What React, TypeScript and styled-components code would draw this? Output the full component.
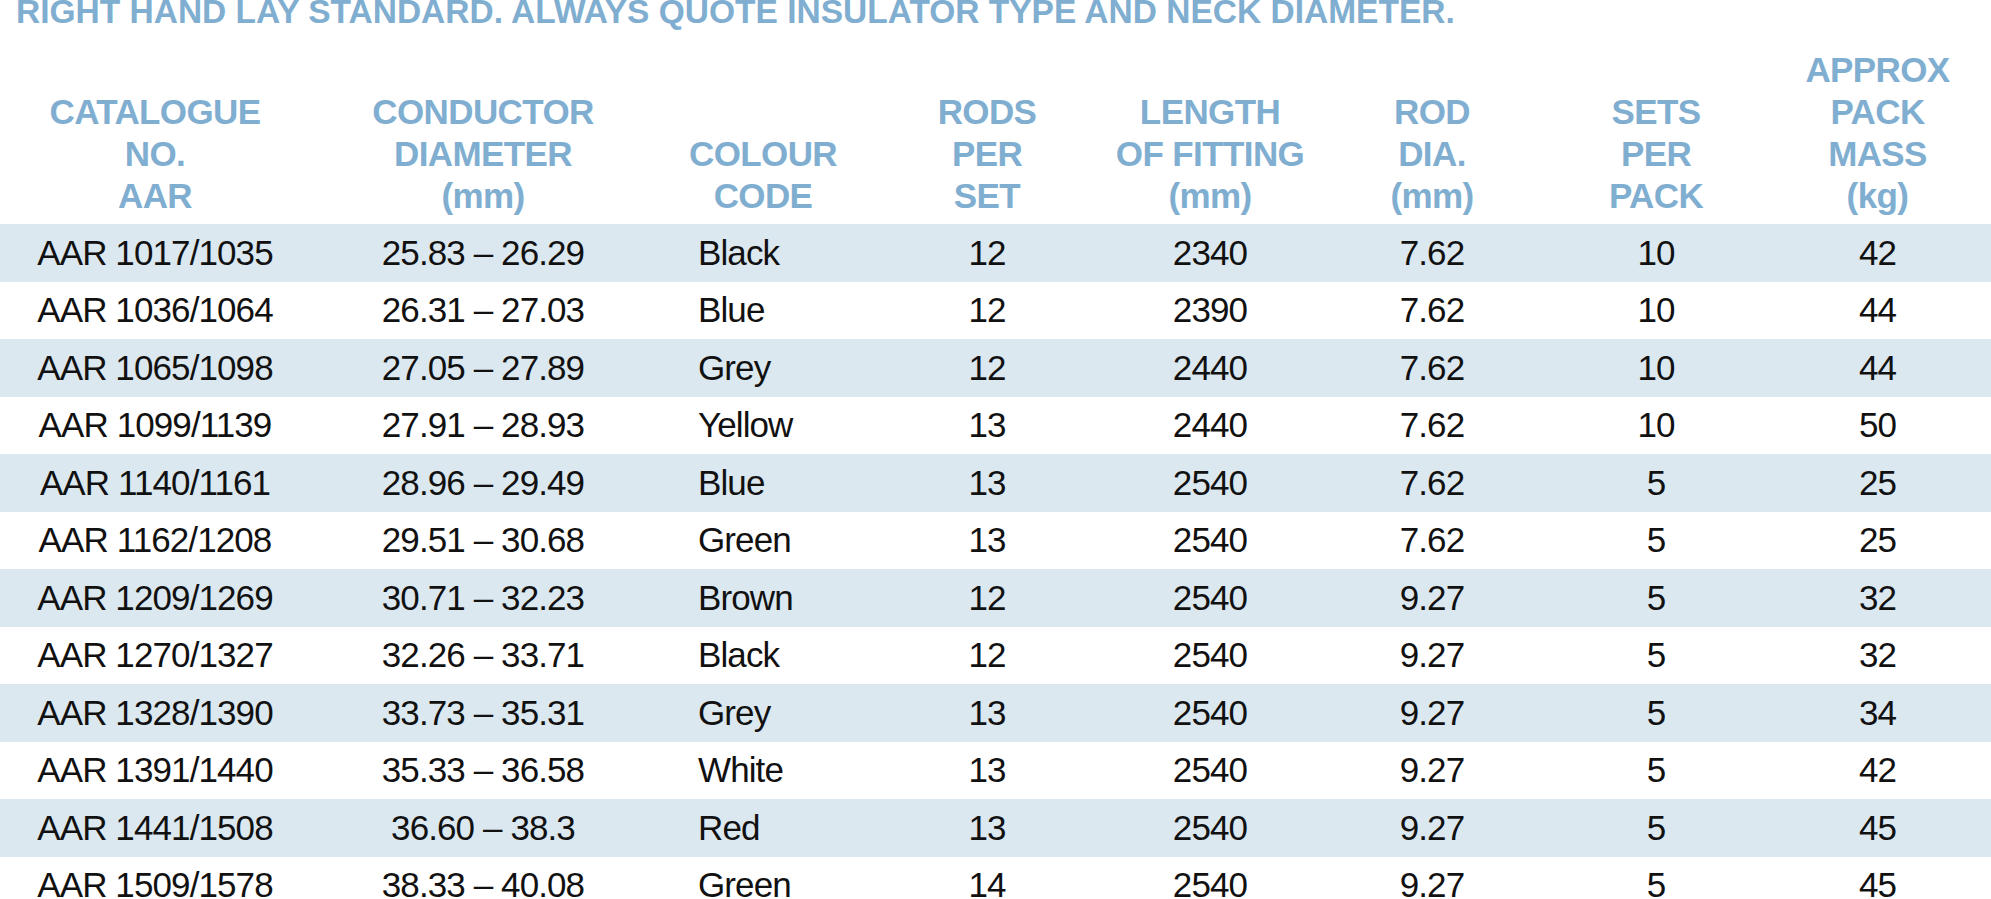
import React from 'react';
import styled, { createGlobalStyle } from 'styled-components';

const GlobalStyle = createGlobalStyle`
  html, body {
    margin: 0;
    padding: 0;
    background: #ffffff;
    overflow: hidden;
  }
  body {
    font-family: 'Liberation Sans', Arial, sans-serif;
  }
`;

type Row = [string, string, string, string, string, string, string, string];

const rows: Row[] = [
  ['AAR 1017/1035', '25.83 – 26.29', 'Black', '12', '2340', '7.62', '10', '42'],
  ['AAR 1036/1064', '26.31 – 27.03', 'Blue', '12', '2390', '7.62', '10', '44'],
  ['AAR 1065/1098', '27.05 – 27.89', 'Grey', '12', '2440', '7.62', '10', '44'],
  ['AAR 1099/1139', '27.91 – 28.93', 'Yellow', '13', '2440', '7.62', '10', '50'],
  ['AAR 1140/1161', '28.96 – 29.49', 'Blue', '13', '2540', '7.62', '5', '25'],
  ['AAR 1162/1208', '29.51 – 30.68', 'Green', '13', '2540', '7.62', '5', '25'],
  ['AAR 1209/1269', '30.71 – 32.23', 'Brown', '12', '2540', '9.27', '5', '32'],
  ['AAR 1270/1327', '32.26 – 33.71', 'Black', '12', '2540', '9.27', '5', '32'],
  ['AAR 1328/1390', '33.73 – 35.31', 'Grey', '13', '2540', '9.27', '5', '34'],
  ['AAR 1391/1440', '35.33 – 36.58', 'White', '13', '2540', '9.27', '5', '42'],
  ['AAR 1441/1508', '36.60 – 38.3', 'Red', '13', '2540', '9.27', '5', '45'],
  ['AAR 1509/1578', '38.33 – 40.08', 'Green', '14', '2540', '9.27', '5', '45'],
];

const headers: string[][] = [
  ['CATALOGUE', 'NO.', 'AAR'],
  ['CONDUCTOR', 'DIAMETER', '(mm)'],
  ['COLOUR', 'CODE'],
  ['RODS', 'PER', 'SET'],
  ['LENGTH', 'OF FITTING', '(mm)'],
  ['ROD', 'DIA.', '(mm)'],
  ['SETS', 'PER', 'PACK'],
  ['APPROX', 'PACK', 'MASS', '(kg)'],
];

const COLUMNS = '310px 346px 214px 234px 212px 232px 216px 227px';

export default function App() {
  return (
    <>
      <GlobalStyle />
      <Page>
        <Title>RIGHT HAND LAY STANDARD. ALWAYS QUOTE INSULATOR TYPE AND NECK DIAMETER.</Title>
        <HeaderRow>
          {headers.map((lines, i) => (
            <HeaderCell key={i}>
              {lines.map((l) => (
                <div key={l}>{l}</div>
              ))}
            </HeaderCell>
          ))}
        </HeaderRow>
        <Body>
          {rows.map((r, i) => (
            <DataRow key={r[0]} $shaded={i % 2 === 0}>
              {r.map((v, j) => (
                <Cell key={j} $left={j === 2}>
                  {v}
                </Cell>
              ))}
            </DataRow>
          ))}
        </Body>
      </Page>
    </>
  );
}

const Page = styled.div`
  width: 1991px;
  height: 899px;
  overflow: hidden;
  display: flex;
  flex-direction: column;
`;

const Title = styled.div`
  margin-top: -3px;
  padding-left: 16px;
  font-size: 33.5px;
  line-height: 30px;
  font-weight: 700;
  color: #80aed0;
  white-space: nowrap;
`;

const HeaderRow = styled.div`
  display: grid;
  grid-template-columns: ${COLUMNS};
  align-items: end;
  margin-top: 22px;
  height: 168px;
`;

const HeaderCell = styled.div`
  text-align: center;
  font-size: 35px;
  line-height: 42px;
  font-weight: 700;
  color: #80aed0;
  letter-spacing: -0.6px;
  white-space: nowrap;
`;

const Body = styled.div`
  margin-top: 7px;
  display: flex;
  flex-direction: column;
`;

const DataRow = styled.div<{ $shaded: boolean }>`
  display: grid;
  grid-template-columns: ${COLUMNS};
  align-items: center;
  height: 57.5px;
  flex-shrink: 0;
  background: ${(p) => (p.$shaded ? '#dbe8f0' : '#ffffff')};
`;

const Cell = styled.div<{ $left: boolean }>`
  text-align: ${(p) => (p.$left ? 'left' : 'center')};
  padding-left: ${(p) => (p.$left ? '42px' : '0')};
  font-size: 35px;
  line-height: 40px;
  color: #111111;
  letter-spacing: -0.9px;
  white-space: nowrap;
`;
